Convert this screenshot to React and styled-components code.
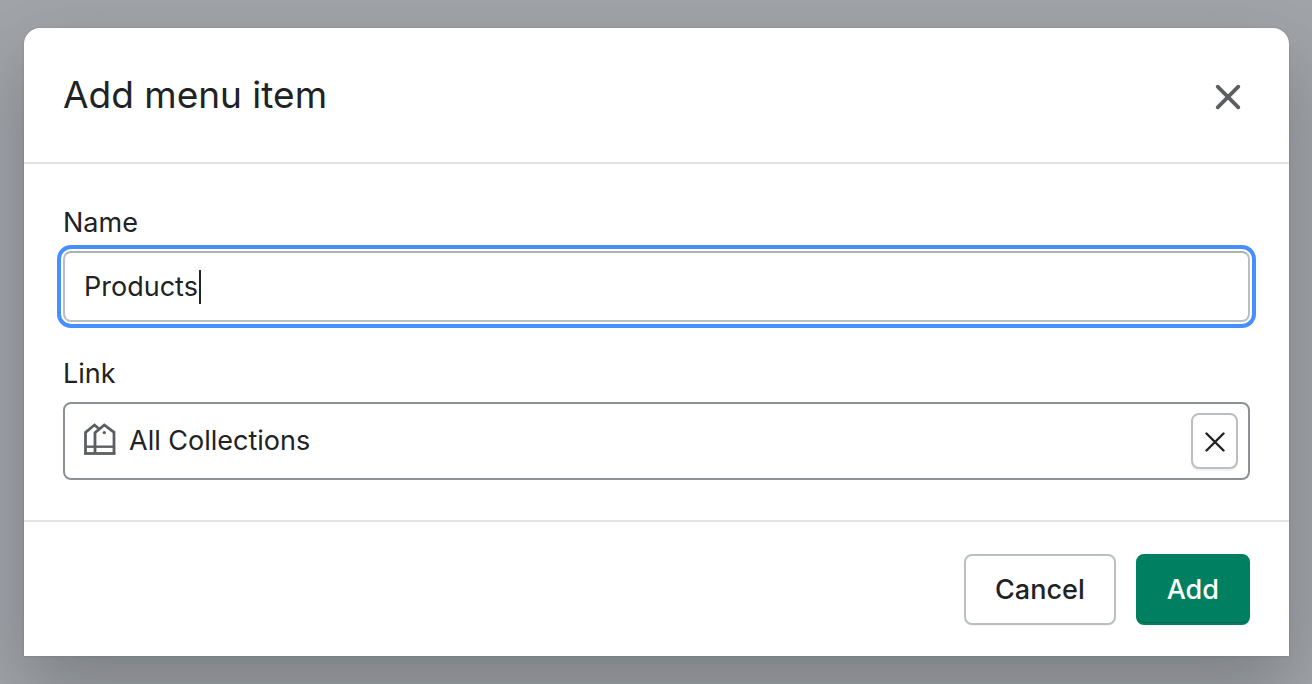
import React, { useState } from 'react';
import styled, { createGlobalStyle, keyframes } from 'styled-components';

const App = () => {
    const [name, setName] = useState('Products');
    const [link, setLink] = useState('All Collections');

    return (
        <Backdrop>
            <GlobalStyle />
            <Dialog role="dialog" aria-modal="true" aria-labelledby="dialog-title">
                <Header>
                    <Title id="dialog-title">Add menu item</Title>
                    <CloseButton type="button" aria-label="Close">
                        <svg width="26" height="26" viewBox="0 0 26 26">
                            <path d='M2.7 2.7l20.6 20.6M23.3 2.7l-20.6 20.6' strokeWidth='3.8'/>
                        </svg>
                    </CloseButton>
                </Header>
                <Body>
                    <Field>
                        <Label htmlFor="name">Name</Label>
                        <NameBox>
                            <NameInput
                                id="name"
                                type="text"
                                value={name}
                                onChange={(e) => setName(e.target.value)}
                            />
                            <Caret />
                        </NameBox>
                    </Field>
                    <Field>
                        <Label htmlFor="link">Link</Label>
                        <LinkBox>
                            <CollectionsIcon width="32" height="36" viewBox="0 0 32 36">
                                <path d='M1.5 30.5V9.3L10.5 2L15.5 6.3M11 30.5V9.6L20.3 2L30 9.3V30.5'/>
                                <path d='M0 30.5H31.5'/>
                                <path d='M1.5 23.7H30' strokeWidth='2.4'/>
                                <circle cx='20.3' cy='9.6' r='1.7'/>
                            </CollectionsIcon>
                            <LinkInput
                                id="link"
                                type="text"
                                value={link}
                                onChange={(e) => setLink(e.target.value)}
                            />
                            <ClearButton type="button" aria-label="Clear link" onClick={() => setLink('')}>
                                <svg width="20" height="20" viewBox="0 0 20 20">
                                    <path d='M1.5 1.5l17 17M18.5 1.5l-17 17' strokeWidth='2.4'/>
                                </svg>
                            </ClearButton>
                        </LinkBox>
                    </Field>
                </Body>
                <Footer>
                    <Button type="button">Cancel</Button>
                    <Button type="button" $primary>Add</Button>
                </Footer>
            </Dialog>
        </Backdrop>
    )
}

const GlobalStyle = createGlobalStyle`
    * {
        box-sizing: border-box;
    }
    body {
        margin: 0;
        background: #a1a4a8;
        color: #202223;
        font-family: Inter, 'Liberation Sans', sans-serif;
    }
    button, input {
        font: inherit;
        color: inherit;
    }
`;

const blink = keyframes`
    0%, 90% { opacity: 1; }
    91%, 100% { opacity: 0; }
`;

const Backdrop = styled.div`
    min-height: 100vh;
    padding: 28px 23px 28px 24px;
    overflow: hidden;
`;

const Dialog = styled.section`
    background: #fff;
    border-radius: 16px 16px 0 0;
    box-shadow: 0 0 2px rgba(32, 34, 35, 0.2), 0 32px 72px rgba(32, 42, 53, 0.3);
`;

const Header = styled.header`
    display: flex;
    align-items: center;
    justify-content: space-between;
    padding: 39px;
    border-bottom: 2px solid #e1e3e5;
`;

const Title = styled.h2`
    margin: 0;
    font-size: 37px;
    font-weight: 400;
    line-height: 56px;
`;

const CloseButton = styled.button`
    display: flex;
    padding: 11px 9px 8px;
    border: 0;
    background: none;
    cursor: pointer;

    svg {
        stroke: #5c5f62;
        stroke-linecap: round;
    }
`;

const Body = styled.div`
    display: flex;
    flex-direction: column;
    gap: 32px;
    padding: 39px 39px 40px;
`;

const Field = styled.div`
    display: flex;
    flex-direction: column;
    gap: 8px;
`;

const Label = styled.label`
    font-size: 27px;
    line-height: 40px;
`;

const Box = styled.div`
    display: flex;
    align-items: center;
    border: 2px solid #8c9196;
    border-radius: 8px;
    font-size: 27px;
    line-height: 40px;
`;

const NameBox = styled(Box)`
    height: 71px;
    padding: 0 19px;
    border-color: #aeb1b5 #babec3 #babfc3;
    outline: 4px solid #458fff;
    outline-offset: 2px;
`;

const NameInput = styled.input`
    field-sizing: content;
    min-width: 1px;
    padding: 0;
    border: 0;
    outline: 0;
    background: none;
    caret-color: transparent;
`;

const Caret = styled.span`
    width: 2px;
    height: 34px;
    margin-left: 1px;
    background: #202223;
    animation: ${blink} 10s infinite;
`;

const LinkBox = styled(Box)`
    gap: 13px;
    height: 78px;
    padding: 0 10px 0 19px;
`;

const CollectionsIcon = styled.svg`
    fill: none;
    stroke: #5c5f62;
    stroke-width: 2.8;

    circle {
        fill: #5c5f62;
        stroke: none;
    }
`;

const LinkInput = styled.input`
    flex: 1;
    min-width: 0;
    padding: 0;
    border: 0;
    outline: 0;
    background: none;
`;

const ClearButton = styled.button`
    display: flex;
    align-items: center;
    justify-content: center;
    width: 47px;
    height: 56px;
    padding: 2px 0 0;
    border: 2px solid #babfc3;
    border-radius: 8px;
    background: #fff;
    box-shadow: 0 2px 0 rgba(0, 0, 0, 0.05);
    cursor: pointer;

    svg {
        stroke: #202223;
        stroke-linecap: round;
    }
`;

const Footer = styled.footer`
    display: flex;
    justify-content: flex-end;
    gap: 20px;
    padding: 32px 39px 31px;
    border-top: 2px solid #e1e3e5;
`;

const Button = styled.button`
    padding: 14px 29px;
    border: 2px solid ${(props) => (props.$primary ? '#008060' : '#babfc3')};
    border-radius: 8px;
    background: ${(props) => (props.$primary ? '#008060' : '#fff')};
    color: ${(props) => (props.$primary ? '#fff' : '#202223')};
    box-shadow: ${(props) => (props.$primary ? 'inset 0 -1px 0 rgba(0, 0, 0, 0.2)' : '0 1px 0 rgba(0, 0, 0, 0.05)')};
    font-size: 27px;
    font-weight: 500;
    line-height: 39px;
    cursor: pointer;
`;

export default App;
